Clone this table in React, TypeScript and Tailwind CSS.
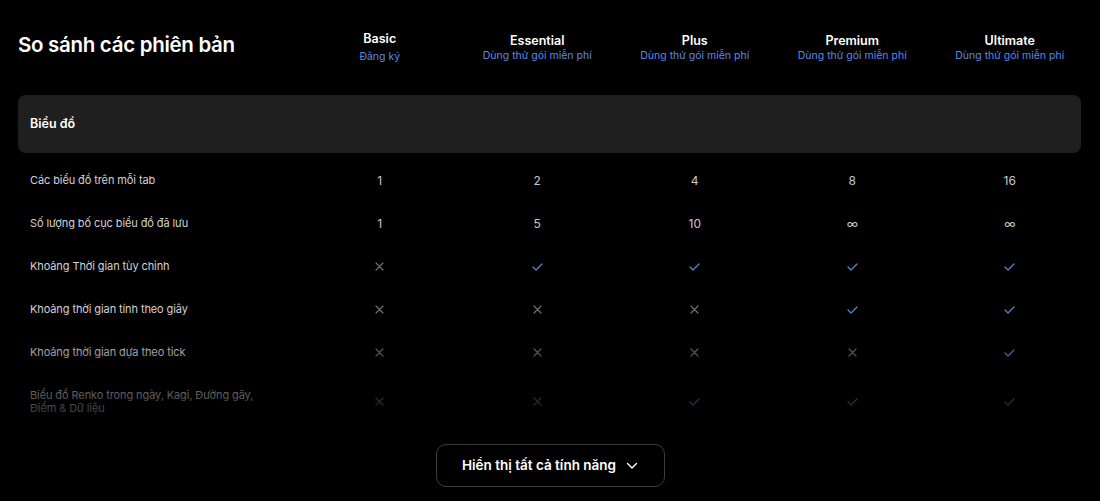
import React from 'react'

type Cell = string | 'yes' | 'no'

const PLANS = [
  { name: 'Basic', cta: 'Đăng ký' },
  { name: 'Essential', cta: 'Dùng thử gói miễn phí' },
  { name: 'Plus', cta: 'Dùng thử gói miễn phí' },
  { name: 'Premium', cta: 'Dùng thử gói miễn phí' },
  { name: 'Ultimate', cta: 'Dùng thử gói miễn phí' },
]

const ROWS: { label: string; cells: Cell[] }[] = [
  { label: 'Các biểu đồ trên mỗi tab', cells: ['1', '2', '4', '8', '16'] },
  { label: 'Số lượng bố cục biểu đồ đã lưu', cells: ['1', '5', '10', '∞', '∞'] },
  { label: 'Khoảng Thời gian tùy chỉnh', cells: ['no', 'yes', 'yes', 'yes', 'yes'] },
  { label: 'Khoảng thời gian tính theo giây', cells: ['no', 'no', 'no', 'yes', 'yes'] },
  { label: 'Khoảng thời gian dựa theo tick', cells: ['no', 'no', 'no', 'no', 'yes'] },
]

function Check() {
  return (
    <svg width="11" height="8" viewBox="0 0 11 8" fill="none" className="text-[#5b82c9]">
      <path d="M1 4l3 3 6-6" stroke="currentColor" strokeWidth="1.3" strokeLinecap="round" strokeLinejoin="round" />
    </svg>
  )
}

function Cross() {
  return (
    <svg width="9" height="9" viewBox="0 0 9 9" fill="none" className="text-[#6f6f6f]">
      <path d="M1 1l7 7M8 1L1 8" stroke="currentColor" strokeWidth="1.2" strokeLinecap="round" />
    </svg>
  )
}

function Value({ v }: { v: Cell }) {
  if (v === 'yes') return <Check />
  if (v === 'no') return <Cross />
  return <span className="text-[12px] text-[#c8c8c8]">{v}</span>
}

export default function App() {
  return (
    <div className="h-[501px] w-[1100px] overflow-hidden bg-black px-[18px] text-white [font-family:Inter,'Noto_Sans',sans-serif]">
      <div className="grid h-[95px] grid-cols-[283px_repeat(5,157.5px)] items-start">
        <h1 className="pt-[31px] text-[20.5px] font-semibold leading-[28px] tracking-[-0.3px]">So sánh các phiên bản</h1>
        {PLANS.map((p, i) => (
          <div key={p.name} className={`flex flex-col items-center ${i === 0 ? 'pt-[31px] gap-[3px]' : 'pt-[33px]'}`}>
            <span className="text-[12.5px] font-semibold leading-[16px]">{p.name}</span>
            <span className="text-[10.5px] leading-[14px] text-[#5b8ae6]">{p.cta}</span>
          </div>
        ))}
      </div>

      <div className="flex h-[58px] w-[1063px] items-center rounded-[8px] bg-[#1f1f1f] px-3">
        <span className="text-[12.5px] font-semibold">Biểu đồ</span>
      </div>

      <div className="relative pt-[6px]">
        {ROWS.map(r => (
          <div key={r.label} className="grid h-[43px] grid-cols-[283px_repeat(5,157.5px)] items-center">
            <span className="pl-3 text-[11px] tracking-[-0.1px] text-[#d2d2d2]">{r.label}</span>
            {r.cells.map((c, i) => (
              <div key={i} className="flex justify-center">
                <Value v={c} />
              </div>
            ))}
          </div>
        ))}
        <div className="grid h-[55px] grid-cols-[283px_repeat(5,157.5px)] items-center">
          <span className="pl-3 text-[11px] leading-[13px] tracking-[-0.1px] text-[#d2d2d2]">
            Biểu đồ Renko trong ngày, Kagi, Đường gãy,
            <br />
            Điểm &amp; Dữ liệu
          </span>
          {(['no', 'no', 'yes', 'yes', 'yes'] as Cell[]).map((c, i) => (
            <div key={i} className="flex justify-center">
              <Value v={c} />
            </div>
          ))}
        </div>
        <div className="pointer-events-none absolute inset-x-0 bottom-0 h-[110px] bg-gradient-to-b from-transparent via-black/40 to-black/85" />
      </div>

      <div className="flex justify-center pt-[15px]">
        <button className="flex h-[43px] w-[229px] items-center justify-center gap-[10px] rounded-[10px] border border-[#3c3c3c] text-[13.5px] font-semibold">
          Hiển thị tất cả tính năng
          <svg width="12" height="8" viewBox="0 0 12 8" fill="none">
            <path d="M1.5 1.5l4.5 4.5 4.5-4.5" stroke="white" strokeWidth="1.4" strokeLinecap="round" strokeLinejoin="round" />
          </svg>
        </button>
      </div>
    </div>
  )
}
